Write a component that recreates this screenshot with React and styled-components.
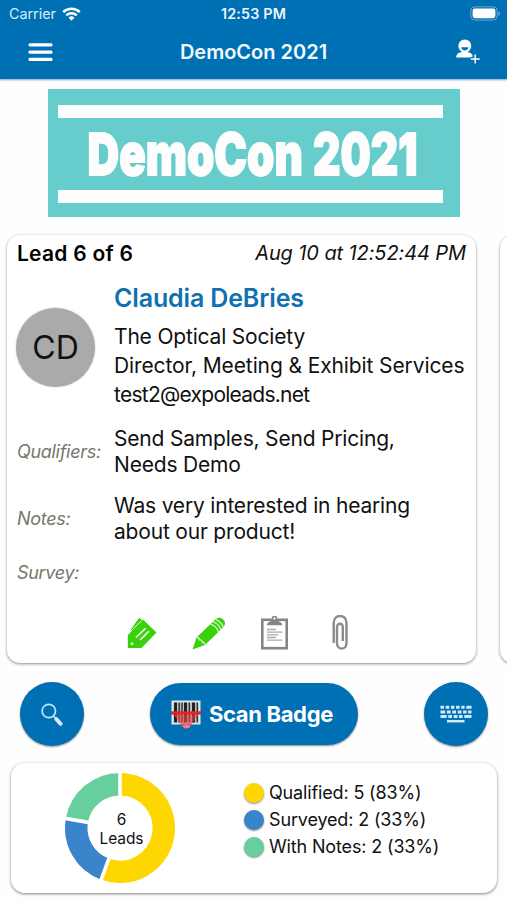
import React from "react";
import styled, { createGlobalStyle } from "styled-components";

const stats = [
  { label: "Qualified", count: 5, percent: 83, color: "#ffd700", from: 0, to: 200 },
  { label: "Surveyed", count: 2, percent: 33, color: "#3a84cc", from: 200, to: 280 },
  { label: "With Notes", count: 2, percent: 33, color: "#66cf9d", from: 280, to: 360 },
];

function StatusBar() {
  return (
    <Status>
      <Carrier>
        Carrier
        <svg width="19" height="14" viewBox="0 0 19 14" fill="none" stroke="#fff" strokeWidth="2.5">
          <path d="M1.2 5.2a11.8 11.8 0 0 1 16.6 0" />
          <path d="M4.3 8.4a7.4 7.4 0 0 1 10.4 0" />
          <path d="M9.5 13.8 6.5 10.7a4.3 4.3 0 0 1 6 0z" fill="#fff" stroke="none" />
        </svg>
      </Carrier>
      <Time>12:53 PM</Time>
      <Battery>
        <svg width="31" height="15" viewBox="0 0 31 15">
          <rect x="0.8" y="0.8" width="26.4" height="13.2" rx="4" fill="none" stroke="#fff" strokeOpacity="0.4" />
          <rect x="2.6" y="2.6" width="22.8" height="9.6" rx="2.4" fill="#fff" />
          <path d="M28.5 5.2c2.2 1 2.2 3.6 0 4.6z" fill="#fff" fillOpacity="0.4" />
        </svg>
      </Battery>
    </Status>
  );
}

function MenuIcon() {
  return (
    <svg width="25" height="20" viewBox="0 0 25 20" stroke="#fff" strokeWidth="3.3" strokeLinecap="round">
      <path d="M2 2.8h21M2 10.2h21M2 17.4h21" />
    </svg>
  );
}

function AddUserIcon() {
  return (
    <svg width="24" height="26" viewBox="0 0 24 26" fill="#fff">
      <path d="M0.2 18.4c0-3.7 2.8-4.8 5.8-5.4h5.7c2.2.5 3.8 1.4 4.8 3.1v2.3z" />
      <circle cx="8.8" cy="6.9" r="6.5" />
      <path d="M5.3 8.3h7c0 4.2-7 4.2-7 0z" fill="#0070b4" />
      <path d="M19.2 15.5v10M14.5 20h9.5" stroke="#0070b4" strokeWidth="4" />
      <path d="M19.2 15.5v9M14.7 20h9" stroke="#fff" strokeWidth="1.5" />
    </svg>
  );
}

function EventBanner() {
  return (
    <Banner>
      <Bar />
      <svg width="385" height="72" viewBox="0 0 385 72">
        <BannerText transform="translate(29.5 56.6) scale(0.755 1)">DemoCon</BannerText>
        <BannerText transform="translate(255 56.6) scale(0.733 1)">2021</BannerText>
      </svg>
      <Bar />
    </Banner>
  );
}

function TagsIcon() {
  return (
    <svg width="30" height="32" viewBox="0 0 30 32">
      <path d="M3.5 13 12 1 16.5 3.5 5 15z" fill="#39d20a" />
      <path d="M0.8 18 16.5 3 29.5 15.5 14.5 31H0.8z" fill="#39d20a" />
      <path d="M4 14 15 3.2" stroke="#d9f8d0" strokeWidth="1" />
      <path d="m9 20.5 9.5-9.2M13 23l9-8.8" stroke="#e6fbe0" strokeWidth="1.7" />
      <circle cx="5" cy="26.8" r="1.4" fill="#e6fbe0" />
    </svg>
  );
}

function PencilIcon() {
  return (
    <svg width="34" height="34" viewBox="0 0 34 34">
      <path d="M0.5 33.5 4.5 21.5 23.5 3.3C28 -1.5 36.5 5.5 31.5 11L13 29z" fill="#39d20a" />
      <path
        d="M4.8 21.5c1.8-.3 2.4 1 2.6 2.3 1.8-.2 2.7.5 2.8 2.2 1.5-.1 2.6 1 2.7 2.8"
        fill="none"
        stroke="#dff9d8"
        strokeWidth="1.3"
      />
      <path
        d="M18.5 8c3 1 6.5 4 8 8M21 5.7c3 1 6.5 4 8 8M23.6 3.6c3 1 6.3 3.8 7.8 7.6"
        fill="none"
        stroke="#dff9d8"
        strokeWidth="1.2"
      />
    </svg>
  );
}

function ClipboardIcon() {
  return (
    <svg width="27" height="35" viewBox="0 0 27 35">
      <rect x="1.3" y="4.8" width="24.4" height="28.4" fill="#fff" stroke="#858585" strokeWidth="2.6" />
      <path d="M6 10.3c0-3.3 2.6-3.2 5-5.1h5c2.4 1.9 5.2 1.8 5.2 5.1z" fill="#858585" />
      <circle cx="13.5" cy="3.5" r="2" fill="#fff" stroke="#858585" strokeWidth="1.7" />
      <path d="M6 14.5h9M6 17.2h15.5M6 19.9h11.5M6 22.5h9M6 25.2h15" stroke="#aaa" strokeWidth="1.3" />
    </svg>
  );
}

function PaperclipIcon() {
  return (
    <svg width="16" height="35" viewBox="0 0 16 35" fill="none" stroke="#8b8b8b" strokeWidth="2.4">
      <path d="M1.7 28V8C1.7-1.4 14.5-1.4 14.5 8v20c0 7.5-9.5 7.500-9.5 0V12c0-4.3 5.8-4.3 5.8 0v14" />
    </svg>
  );
}

function SearchIcon() {
  return (
    <svg width="22" height="23" viewBox="0 0 22 23" fill="none">
      <circle cx="7.8" cy="8" r="6.7" stroke="#c4e3f7" strokeWidth="1.7" />
      <path d="m12.5 13 3 3.3" stroke="#c4e3f7" strokeWidth="1.8" />
      <path d="m15.5 16.2 4 4.6" stroke="#d6ecfa" strokeWidth="4" strokeLinecap="round" />
    </svg>
  );
}

function BarcodeIcon() {
  return (
    <svg width="30" height="29" viewBox="0 0 30 29">
      <path d="M0.5 0.5h29v24h-29z" fill="#dfe5e8" />
      <path d="M2.5 2.5h25v20h-25z" fill="#bcc2c4" />
      <path d="M4.5 2.5v20M14.5 2.5v20M22.5 2.5v20" stroke="#222" strokeWidth="3" />
      <path d="M8.2 2.5v20M11 2.5v20M18.3 2.5v20M26.3 2.5v20" stroke="#333" strokeWidth="1.5" />
      <path d="M3 15h24l-8 11.5q-4 3-8 0z" fill="#f04444" fillOpacity="0.65" />
      <path d="M11 26q4.5-2 9 0-4.5 5-9 0z" fill="#f58383" />
      <path d="M0 11.3h30v3.3H0z" fill="#e32626" />
    </svg>
  );
}

function KeyboardIcon() {
  return (
    <svg width="32" height="18" viewBox="0 0 32 18" stroke="#d4eafa" strokeWidth="3" fill="none">
      <path d="M0.5 2.2h3.5M5.7 2.2h3.5M10.9 2.2h3.5M16.1 2.2h3.5M21.3 2.2h3.3M26.3 2.2h5.2" />
      <path d="M0.5 7h4.7M6.9 7h3.7M12.3 7H16M17.7 7h3.7M23.1 7h3.5M28.1 7h3.4" />
      <path d="M0.5 11.5h6.2M8.3 11.5H12M13.7 11.5h3.7M18.9 11.5h3.7M24.3 11.5h7.2" />
      <path d="M7 16.2h17.5" strokeWidth="2.5" />
    </svg>
  );
}

const point = (deg, r) => {
  const rad = (deg * Math.PI) / 180;
  return `${55 + r * Math.sin(rad)} ${55 - r * Math.cos(rad)}`;
};

function Donut() {
  return (
    <Chart>
      <svg width="110" height="110" viewBox="0 0 110 110">
        {stats.map((s) => (
          <path
            key={s.label}
            d={`M${point(s.from, 43.75)} A43.75 43.75 0 ${s.to - s.from > 180 ? 1 : 0} 1 ${point(s.to, 43.75)}`}
            fill="none"
            stroke={s.color}
            strokeWidth="22.5"
          />
        ))}
        {stats.map((s) => (
          <path key={s.label} d={`M${point(s.from, 31)} L${point(s.from, 56)}`} stroke="#fff" strokeWidth="3.6" />
        ))}
      </svg>
      <ChartLabel>
        6<br />
        Leads
      </ChartLabel>
    </Chart>
  );
}

function LeadCard() {
  return (
    <Card>
      <CardTop>
        <LeadCount>Lead 6 of 6</LeadCount>
        <LeadDate>Aug 10 at 12:52:44 PM</LeadDate>
      </CardTop>
      <Person>
        <Avatar>CD</Avatar>
        <div>
          <Name>Claudia DeBries</Name>
          <Line $spacing="-0.18px">The Optical Society</Line>
          <Line $spacing="-0.11px">Director, Meeting &amp; Exhibit Services</Line>
          <Line $spacing="-0.74px">test2@expoleads.net</Line>
        </div>
      </Person>
      <Details>
        <Row $height={67}>
          <Label>Qualifiers:</Label>
          <Value>
            Send Samples, Send Pricing,
            <br />
            Needs Demo
          </Value>
        </Row>
        <Row $height={67}>
          <Label>Notes:</Label>
          <Value>
            Was very interested in hearing
            <br />
            about our product!
          </Value>
        </Row>
        <Row $height={41}>
          <Label>Survey:</Label>
        </Row>
      </Details>
      <Actions>
        <TagsIcon />
        <PencilIcon />
        <ClipboardIcon />
        <PaperclipIcon />
      </Actions>
    </Card>
  );
}

function App() {
  return (
    <>
      <GlobalStyle />
      <Screen>
        <Header>
          <StatusBar />
          <NavBar>
            <MenuIcon />
            <Title>DemoCon 2021</Title>
            <AddUserIcon />
          </NavBar>
        </Header>
        <EventBanner />
        <Carousel>
          <LeadCard />
          <Card />
        </Carousel>
        <Controls>
          <RoundButton>
            <SearchIcon />
          </RoundButton>
          <ScanButton>
            <BarcodeIcon />
            <span>Scan Badge</span>
          </ScanButton>
          <RoundButton>
            <KeyboardIcon />
          </RoundButton>
        </Controls>
        <StatsCard>
          <Donut />
          <Legend>
            {stats.map((s) => (
              <LegendItem key={s.label}>
                <Dot $color={s.color} />
                {s.label}: {s.count} ({s.percent}%)
              </LegendItem>
            ))}
          </Legend>
        </StatsCard>
      </Screen>
    </>
  );
}
export default App;

const GlobalStyle = createGlobalStyle`
  * {
    box-sizing: border-box;
  }
  body {
    margin: 0;
    background: #fff;
    color: #111;
    font-family: Inter, "Liberation Sans", sans-serif;
  }
  svg {
    display: block;
    flex-shrink: 0;
  }
`;

const Screen = styled.div`
  width: 507px;
  height: 900px;
  overflow: hidden;
  background: #fefefe;
`;

const Header = styled.header`
  height: 79px;
  background: #0070b4;
  color: #fff;
  box-shadow: 0 1px 2px rgba(0, 80, 130, 0.5);
`;

const Status = styled.div`
  display: grid;
  grid-template-columns: 1fr auto 1fr;
  align-items: center;
  height: 27px;
  padding: 0 6px 0 9px;
`;

const Carrier = styled.div`
  display: flex;
  align-items: center;
  gap: 6px;
  font-size: 14.3px;
  color: #d8ecf8;
`;

const Time = styled.div`
  margin-left: -3px;
  font-size: 14.3px;
  font-weight: 600;
  letter-spacing: 0.2px;
  color: #eaf5fc;
`;

const Battery = styled.div`
  display: flex;
  justify-content: flex-end;
`;

const NavBar = styled.nav`
  display: flex;
  align-items: center;
  justify-content: space-between;
  height: 50px;
  padding: 0 27px 0 28px;
`;

const Title = styled.h1`
  margin: 0 2px 0 0;
  font-size: 20px;
  font-weight: 600;
  color: #f2f9fd;
`;

const Banner = styled.div`
  display: flex;
  flex-direction: column;
  width: 412px;
  height: 128px;
  margin: 10px 0 0 48px;
  padding: 16px 17px 15px 10px;
  background: #66cccc;
`;

const Bar = styled.div`
  height: 13px;
  flex-shrink: 0;
  background: #fdfdfd;
`;

const BannerText = styled.text`
  font-family: Inter, sans-serif;
  font-size: 58px;
  font-weight: 900;
  fill: #fdfdfd;
  stroke: #fdfdfd;
  stroke-width: 1.8px;
`;

const Carousel = styled.div`
  display: flex;
  gap: 24px;
  padding: 18px 0 0 7px;
`;

const Card = styled.section`
  flex: 0 0 469px;
  height: 428px;
  border-radius: 13px;
  background: #fff;
  box-shadow: 0 1px 3px rgba(0, 0, 0, 0.45);
`;

const CardTop = styled.div`
  display: flex;
  justify-content: space-between;
  align-items: center;
  height: 36px;
  padding: 0 10px;
`;

const LeadCount = styled.div`
  font-size: 21px;
  font-weight: 600;
  letter-spacing: 0.25px;
  color: #000;
`;

const LeadDate = styled.div`
  font-size: 20px;
  font-style: italic;
  letter-spacing: -0.1px;
`;

const Person = styled.div`
  display: flex;
  align-items: center;
  gap: 19px;
  height: 147px;
  padding-left: 9px;
`;

const Avatar = styled.div`
  display: flex;
  align-items: center;
  justify-content: center;
  width: 79px;
  height: 79px;
  margin-top: 5px;
  border-radius: 50%;
  background: #aaa;
  box-shadow: 0 0 2px rgba(0, 0, 0, 0.25);
  font-size: 32px;
`;

const Name = styled.h2`
  margin: 0 0 6px;
  font-size: 25px;
  line-height: 38px;
  font-weight: 600;
  letter-spacing: -0.14px;
  color: #1070b0;
`;

const Line = styled.div`
  font-size: 21px;
  line-height: 28.7px;
  letter-spacing: ${(props) => props.$spacing};
  white-space: nowrap;
`;

const Details = styled.div`
  display: flex;
  flex-direction: column;
  padding: 0 0 0 10px;
`;

const Row = styled.div`
  display: grid;
  grid-template-columns: 97px 1fr;
  align-items: center;
  height: ${(props) => props.$height}px;
`;

const Label = styled.div`
  font-size: 18px;
  font-style: italic;
  letter-spacing: -0.3px;
  color: #77776c;
`;

const Value = styled.div`
  font-size: 21px;
  line-height: 26px;
  letter-spacing: -0.19px;
  white-space: nowrap;
`;

const Actions = styled.div`
  display: flex;
  align-items: center;
  margin-top: 22px;
  padding-left: 120px;

  svg {
    margin-right: 35px;
  }
  svg:nth-child(3) {
    margin-right: 44px;
  }
`;

const Controls = styled.div`
  display: flex;
  align-items: center;
  justify-content: space-between;
  height: 64px;
  margin: 19px 19px 0 20px;
`;

const RoundButton = styled.button`
  display: flex;
  align-items: center;
  justify-content: center;
  width: 64px;
  height: 64px;
  padding: 0;
  border: 0;
  border-radius: 50%;
  background: #0070b4;
  box-shadow: 0 1px 2px rgba(0, 0, 0, 0.45);
`;

const ScanButton = styled.button`
  display: flex;
  align-items: center;
  gap: 8px;
  width: 208px;
  height: 62px;
  padding: 0 0 0 21px;
  border: 0;
  border-radius: 31px;
  background: #0070b4;
  box-shadow: 0 1px 2px rgba(0, 0, 0, 0.45);
  color: #fff;
  font-family: inherit;
  font-size: 22px;
  font-weight: 700;
  letter-spacing: -0.35px;
  white-space: nowrap;
`;

const StatsCard = styled.section`
  display: flex;
  align-items: flex-start;
  gap: 69px;
  width: 486px;
  height: 130px;
  margin: 17px 0 0 11px;
  padding: 10px 0 0 54px;
  border-radius: 14px;
  background: #fff;
  box-shadow: 0 1px 3px rgba(0, 0, 0, 0.5);
`;

const Chart = styled.div`
  position: relative;
  width: 110px;
  height: 110px;
`;

const ChartLabel = styled.div`
  position: absolute;
  inset: 0;
  display: flex;
  align-items: center;
  justify-content: center;
  padding: 2px 0 0 3px;
  text-align: center;
  font-size: 15.5px;
  line-height: 19px;
  letter-spacing: -0.1px;
`;

const Legend = styled.div`
  padding-top: 6px;
`;

const LegendItem = styled.div`
  display: flex;
  align-items: center;
  gap: 5px;
  height: 27px;
  font-size: 18px;
  letter-spacing: -0.15px;
  white-space: nowrap;
`;

const Dot = styled.span`
  width: 20px;
  height: 20px;
  border-radius: 50%;
  background: ${(props) => props.$color};
  box-shadow: 0 1px 2px rgba(0, 0, 0, 0.45);
`;
